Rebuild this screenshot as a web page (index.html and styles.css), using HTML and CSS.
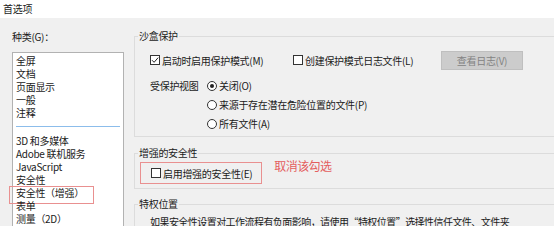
FILE: index.html
```html
<!DOCTYPE html>
<html lang="zh-CN">
<head>
<meta charset="utf-8">
<title>首选项</title>
<link rel="stylesheet" href="styles.css">
</head>
<body>
<div class="titlebar">首选项</div>
<div class="main">
  <div class="left">
    <div class="cat-label">种类(G)：</div>
    <div class="listbox">
      <div class="item">全屏</div>
      <div class="item">文档</div>
      <div class="item">页面显示</div>
      <div class="item">一般</div>
      <div class="item">注释</div>
      <div class="sep"></div>
      <div class="item">3D 和多媒体</div>
      <div class="item">Adobe 联机服务</div>
      <div class="item">JavaScript</div>
      <div class="item">安全性</div>
      <div class="item marked">安全性（增强）<span class="mark"></span></div>
      <div class="item">表单</div>
      <div class="item">测量（2D）</div>
      <div class="item">测量（3D）</div>
    </div>
  </div>
  <div class="right">
    <fieldset class="group g1">
      <legend>沙盒保护</legend>
      <div class="inner">
        <div class="row1">
          <label class="check"><span class="box"><svg viewBox="0 0 10 10" width="10" height="10"><path d="M2 5.2 L4.1 7.3 L8.2 2.6" fill="none" stroke="#222" stroke-width="1"/></svg></span>启动时启用保护模式(M)</label>
          <label class="check"><span class="box"></span>创建保护模式日志文件(L)</label>
          <button class="btn" disabled>查看日志(V)</button>
        </div>
        <div class="pv">
          <div class="pv-label">受保护视图</div>
          <div class="radios">
            <label class="radio"><span class="dot on"></span>关闭(O)</label>
            <label class="radio"><span class="dot"></span>来源于存在潜在危险位置的文件(P)</label>
            <label class="radio"><span class="dot"></span>所有文件(A)</label>
          </div>
        </div>
      </div>
    </fieldset>
    <fieldset class="group g2">
      <legend>增强的安全性</legend>
      <div class="inner2">
        <div class="redbox">
          <label class="check"><span class="box"></span>启用增强的安全性(E)</label>
        </div>
        <div class="note">取消该勾选</div>
      </div>
    </fieldset>
    <fieldset class="group g3">
      <legend>特权位置</legend>
      <div class="inner">
        <div class="desc">如果安全性设置对工作流程有负面影响，请使用“特权位置”选择性信任文件、文件夹</div>
      </div>
    </fieldset>
  </div>
</div>
</body>
</html>
```
FILE: styles.css
```css
html, body {
  margin: 0;
  padding: 0;
  overflow: hidden;
}
body {
  width: 554px;
  height: 226px;
  background: #f0f0f0;
  font-family: "Noto Sans CJK SC", "Noto Sans", sans-serif;
  font-size: 10px;
  letter-spacing: -0.3px;
  color: #1b1b1b;
}
.titlebar {
  height: 18px;
  background: #ffffff;
  padding-left: 3px;
  line-height: 17px;
}
.main {
  display: flex;
  gap: 10px;
}
.left {
  width: 112px;
  padding-left: 12px;
  flex: none;
}
.cat-label {
  margin-top: 12px;
  line-height: 13px;
  height: 13px;
}
.listbox {
  margin-top: 9px;
  background: #ffffff;
  border: 1px solid #b2b2b2;
  height: 220px;
  padding-top: 1px;
  box-sizing: border-box;
}
.item {
  line-height: 13px;
  height: 13px;
  padding-left: 3px;
  white-space: nowrap;
  position: relative;
}
.sep {
  height: 15px;
  display: flex;
  align-items: center;
  padding: 0 3px;
}
.sep::before {
  content: "";
  flex: 1;
  height: 1px;
  background: #8cbdeb;
}
.mark {
  position: absolute;
  left: -4px;
  top: 0;
  width: 83px;
  height: 16px;
  border: 1px solid #e99090;
}
.right {
  flex: none;
  width: 440px;
}
.group {
  border: 1px solid #dcdcdc;
  margin: 0;
  padding: 0;
  min-width: 0;
}
.group legend {
  padding: 0 1px;
  margin-left: 3px;
  line-height: 14px;
  height: 14px;
}
.g1 {
  margin-top: 11px;
}
.inner {
  padding-left: 15px;
}
.g1 .inner {
  padding-top: 7px;
  padding-bottom: 3px;
}
.row1 {
  display: grid;
  grid-template-columns: 143px 148px auto;
  align-items: center;
  height: 20px;
}
.check {
  display: flex;
  align-items: center;
  gap: 2px;
  white-space: nowrap;
}
.box {
  width: 8px;
  height: 8px;
  border: 1px solid #333333;
  background: #ffffff;
  display: flex;
  align-items: center;
  justify-content: center;
  flex: none;
}
.box svg {
  flex: none;
}
.btn {
  width: 82px;
  height: 19px;
  padding: 0;
  background: #cccccc;
  border: 1px solid #bfbfbf;
  color: #838383;
  font-family: inherit;
  font-size: 10px;
  letter-spacing: -0.3px;
  line-height: 17px;
}
.pv {
  display: grid;
  grid-template-columns: 57px auto;
  margin-top: 6px;
}
.pv-label {
  line-height: 19px;
}
.radios {
  display: flex;
  flex-direction: column;
}
.radio {
  display: flex;
  align-items: center;
  gap: 2px;
  height: 19px;
  white-space: nowrap;
}
.dot {
  width: 8px;
  height: 8px;
  border: 1px solid #333333;
  border-radius: 50%;
  background: #ffffff;
  display: flex;
  align-items: center;
  justify-content: center;
  flex: none;
}
.dot.on::before {
  content: "";
  width: 4px;
  height: 4px;
  border-radius: 50%;
  background: #222222;
}
.g2 {
  margin-top: 9px;
}
.inner2 {
  display: flex;
  align-items: flex-start;
  gap: 12px;
  padding: 2px 0 4px 5px;
}
.redbox {
  border: 1px solid #e99090;
  height: 20px;
  padding: 0 9px 0 10px;
  display: flex;
  align-items: center;
}
.note {
  color: #e45e5e;
  font-size: 12px;
  line-height: 14px;
  margin-top: -3px;
  letter-spacing: -0.6px;
}
.g3 {
  margin-top: 8px;
}
.g3 .inner {
  padding-top: 4px;
}
.desc {
  line-height: 14px;
  white-space: nowrap;
  letter-spacing: -0.55px;
}
```
